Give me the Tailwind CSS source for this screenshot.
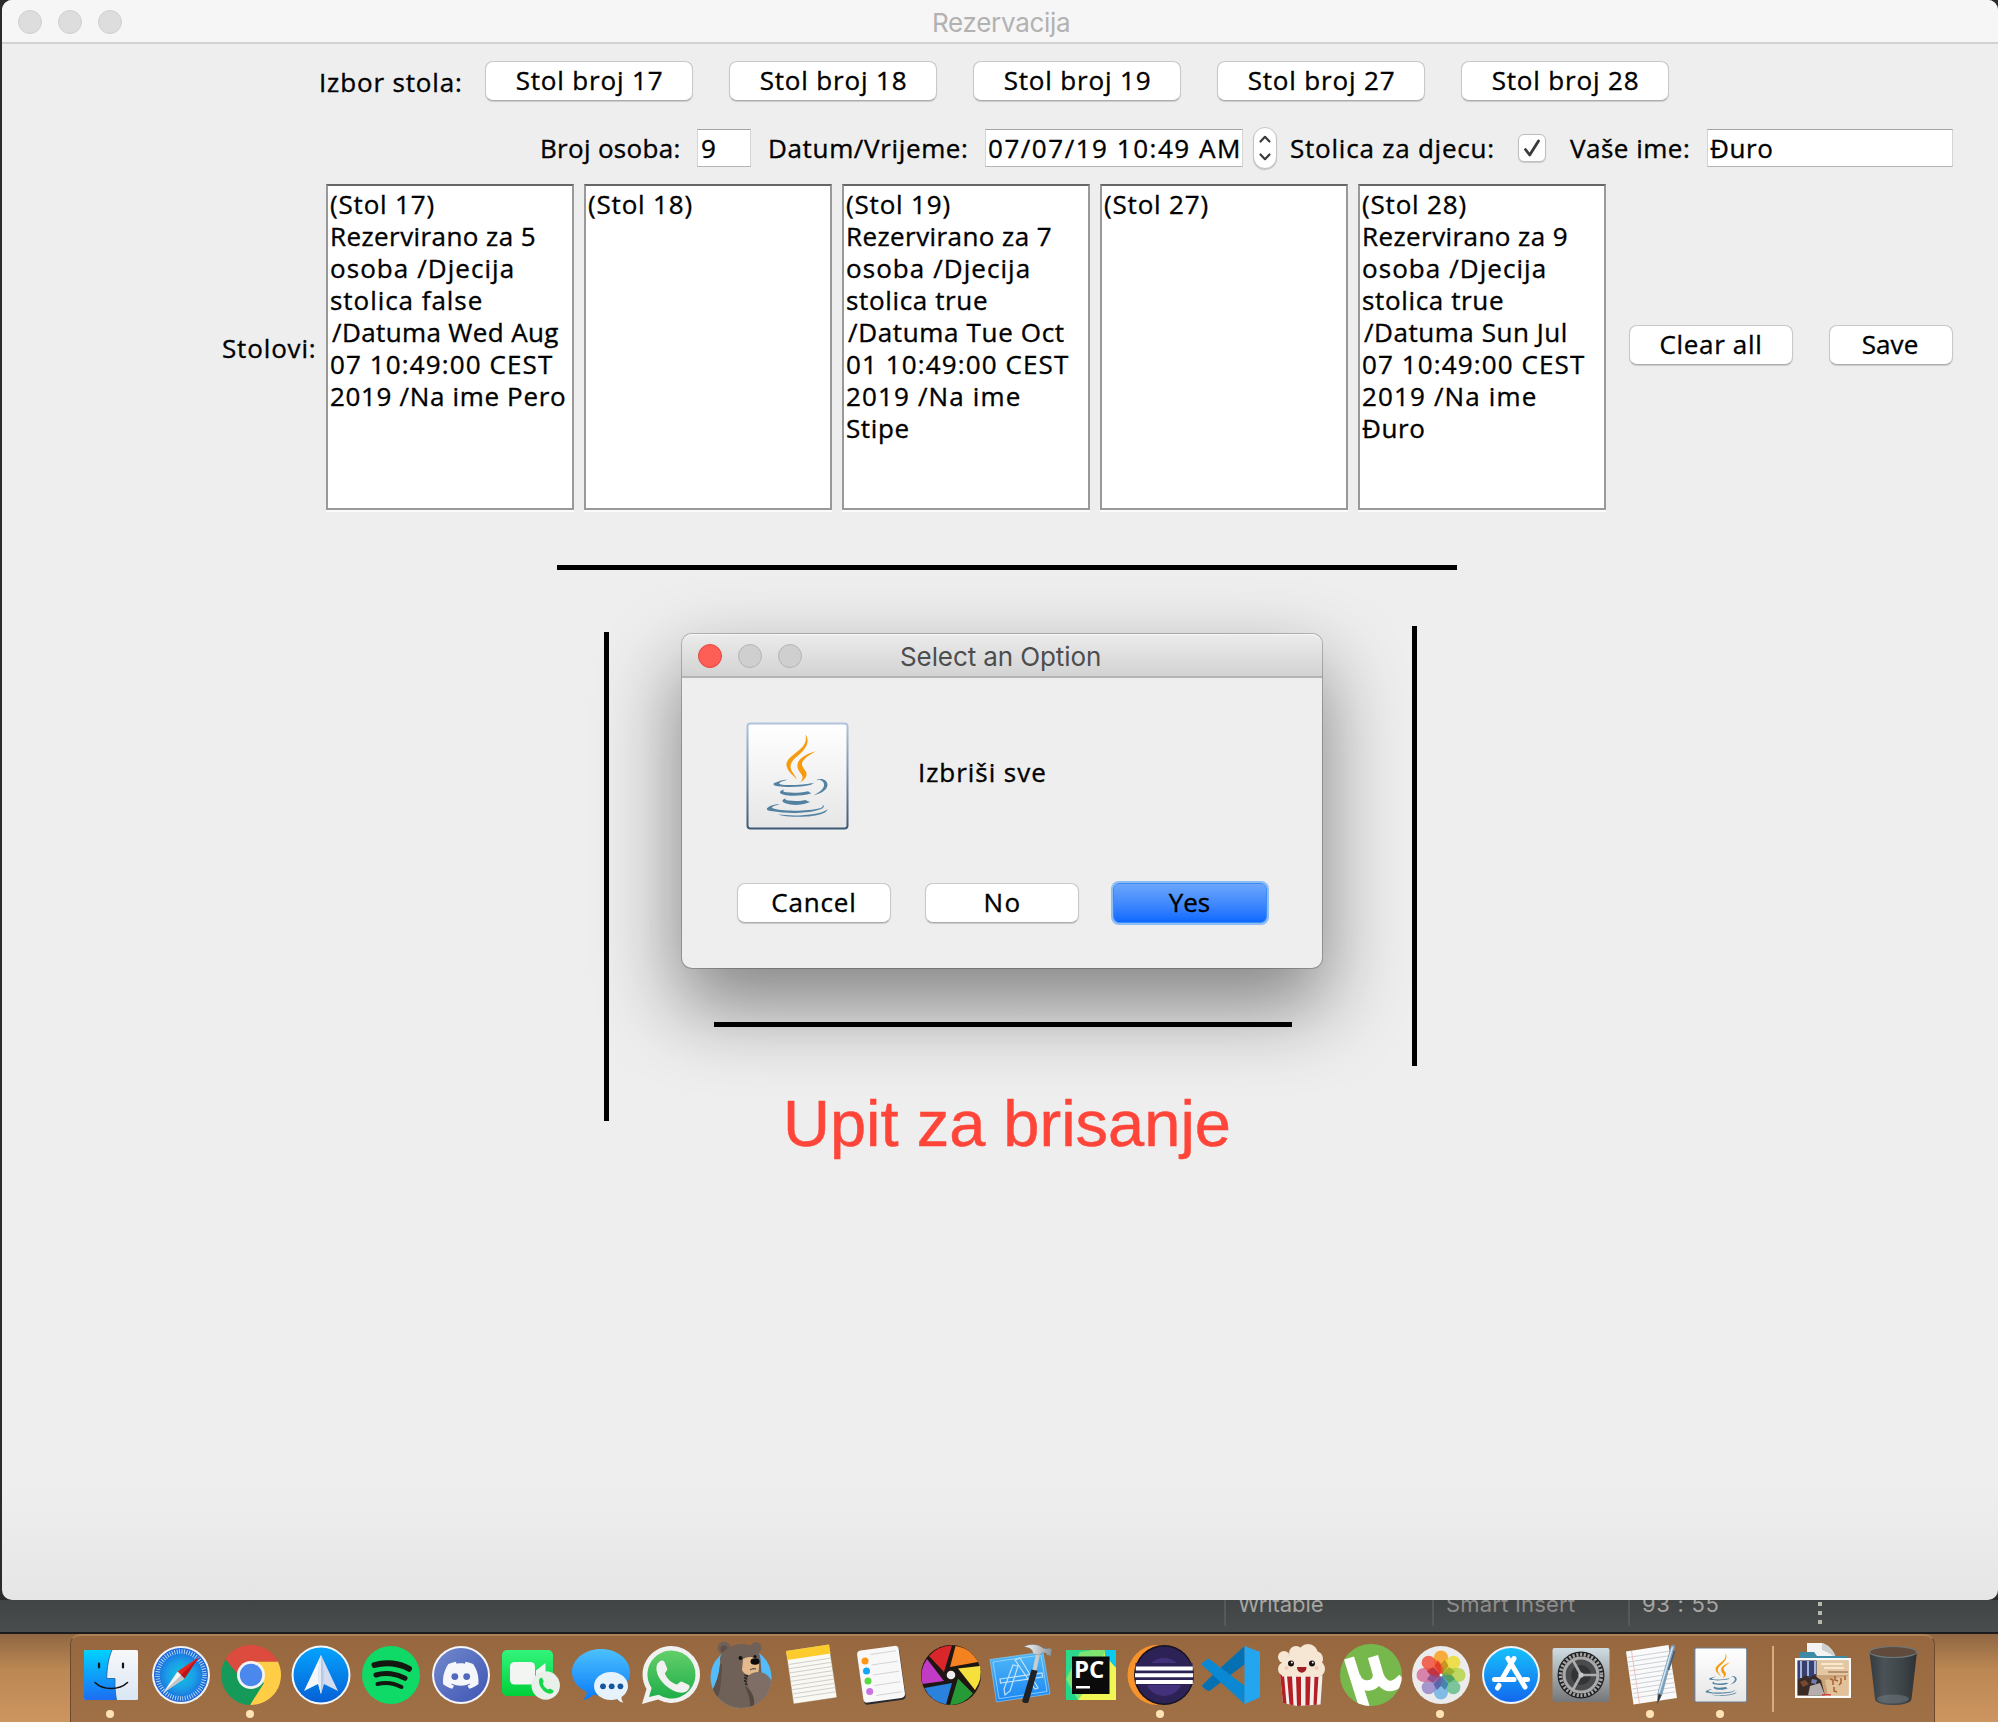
<!DOCTYPE html>
<html lang="hr">
<head>
<meta charset="utf-8">
<title>Rezervacija</title>
<script src="https://cdn.jsdelivr.net/npm/@tailwindcss/browser@4"></script>
</head>
<body class="w-[1998px] h-[1722px] overflow-hidden bg-[#2b2b2d]">
<div class="relative flex flex-col w-[1998px] h-[1722px] overflow-hidden font-['Open_Sans',sans-serif] text-[26px] leading-8 text-black whitespace-nowrap">

  <!-- Main window -->
  <main class="relative ml-0.5 w-[1996px] h-[1600px] shrink-0 flex flex-col rounded-[10px] overflow-hidden bg-linear-to-b from-[#eeeeee] from-93% to-[#e6e6e6] [-webkit-text-stroke:0.35px]">
    <header class="flex items-center h-11 shrink-0 bg-[#f6f6f6] border-b-2 border-[#d2d2d2] pl-4 [-webkit-text-stroke:0]">
      <div class="flex gap-4 w-[914px] pt-px">
        <span class="size-6 rounded-full bg-[#dddddd] border border-[#cfcfcf]"></span>
        <span class="size-6 rounded-full bg-[#dddddd] border border-[#cfcfcf]"></span>
        <span class="size-6 rounded-full bg-[#dddddd] border border-[#cfcfcf]"></span>
      </div>
      <h1 class="pt-1 font-[Inter,sans-serif] tracking-[-0.3px] text-[#b2b2b2]">Rezervacija</h1>
    </header>

    <section class="flex items-center h-10 mt-[17px] pl-[317px]">
      <span class="w-[166px] pt-0.5 tracking-[0.85px]">Izbor stola:</span>
      <div class="flex gap-9 tracking-[0.83px]">
        <button class="flex items-center justify-center w-[208px] h-10 pb-[3px] bg-white rounded-lg border border-[#c8c8c8] border-b-[#acacac] shadow-[0_1px_1px_rgba(0,0,0,0.15)] pl-px">Stol broj 17</button>
        <button class="flex items-center justify-center w-[208px] h-10 pb-[3px] bg-white rounded-lg border border-[#c8c8c8] border-b-[#acacac] shadow-[0_1px_1px_rgba(0,0,0,0.15)] pl-px">Stol broj 18</button>
        <button class="flex items-center justify-center w-[208px] h-10 pb-[3px] bg-white rounded-lg border border-[#c8c8c8] border-b-[#acacac] shadow-[0_1px_1px_rgba(0,0,0,0.15)] pl-px">Stol broj 19</button>
        <button class="flex items-center justify-center w-[208px] h-10 pb-[3px] bg-white rounded-lg border border-[#c8c8c8] border-b-[#acacac] shadow-[0_1px_1px_rgba(0,0,0,0.15)] pl-px">Stol broj 27</button>
        <button class="flex items-center justify-center w-[208px] h-10 pb-[3px] bg-white rounded-lg border border-[#c8c8c8] border-b-[#acacac] shadow-[0_1px_1px_rgba(0,0,0,0.15)] pl-px">Stol broj 28</button>
      </div>
    </section>

    <section class="flex items-center h-[42px] mt-[26px] pl-[538px]">
      <span class="w-[157px] pb-px tracking-[0.3px]">Broj osoba:</span>
      <div class="flex items-center w-[54px] h-[38px] pl-[3px] pb-px bg-white border border-[#d4d4d4] border-t-[#a4a4a4] border-b-[#b4b4b4]">9</div>
      <span class="ml-[17px] w-[217px] pb-px tracking-[0.65px]">Datum/Vrijeme:</span>
      <div class="flex items-center w-[258px] h-[38px] pl-0.5 pb-px bg-white border border-[#d4d4d4] border-t-[#a4a4a4] border-b-[#b4b4b4] tracking-[1.53px]">07/07/19 10:49 AM</div>
      <div class="ml-2.5 w-6 h-[42px] flex items-center justify-center rounded-xl bg-white border border-[#c4c4c4] shadow-[0_1px_1px_rgba(0,0,0,0.2)]">
        <svg class="w-4 h-8" viewBox="0 0 16 32" fill="none" stroke="#3a3a3a" stroke-width="2.2" stroke-linecap="round" stroke-linejoin="round"><path d="M3.5 9.5 8 4.8l4.500 4.700M3.500 22.500 8 27.200l4.500-4.700"/></svg>
      </div>
      <span class="ml-[13px] w-[228px] pb-px tracking-[0.78px]">Stolica za djecu:</span>
      <div class="size-7 flex items-center justify-center rounded-md bg-white border border-[#bdbdbd] shadow-[0_1px_1px_rgba(0,0,0,0.15)]">
        <svg class="size-6" viewBox="0 0 24 24" fill="none" stroke="#3a3a3a" stroke-width="2.800" stroke-linecap="round" stroke-linejoin="round"><path d="M5.500 13.500 9.700 19 18.500 5"/></svg>
      </div>
      <span class="ml-6 w-[137px] pb-px tracking-[0.5px]">Vaše ime:</span>
      <div class="flex items-center w-[246px] h-[38px] pl-0.5 pb-px bg-white border border-[#d4d4d4] border-t-[#a4a4a4] border-b-[#b4b4b4] tracking-[0.6px]">Đuro</div>
    </section>

    <section class="flex items-center h-[326px] mt-[15px] pl-[220px]">
      <span class="w-[104px] pt-0.5 tracking-[0.85px]">Stolovi:</span>
      <div class="flex gap-2.5">
        <div class="flex flex-col w-[248px] h-[326px] pl-0.5 pt-0.5 bg-white border-2 border-[#999999] border-t-[#666666] shadow-[0_2px_0_#fbfbfb]">
          <span class="tracking-[0.82px]">(Stol 17)</span>
          <span class="tracking-[0.42px]">Rezervirano za 5</span>
          <span class="tracking-[1.06px]">osoba /Djecija</span>
          <span class="tracking-[0.95px]">stolica false</span>
          <span class="pl-0.5 tracking-[0.38px]">/Datuma Wed Aug</span>
          <span class="tracking-[1.12px]">07 10:49:00 CEST</span>
          <span class="tracking-[0.66px]">2019 /Na ime Pero</span>
        </div>
        <div class="flex flex-col w-[248px] h-[326px] pl-0.5 pt-0.5 bg-white border-2 border-[#999999] border-t-[#666666] shadow-[0_2px_0_#fbfbfb]">
          <span class="tracking-[0.82px]">(Stol 18)</span>
        </div>
        <div class="flex flex-col w-[248px] h-[326px] pl-0.5 pt-0.5 bg-white border-2 border-[#999999] border-t-[#666666] shadow-[0_2px_0_#fbfbfb]">
          <span class="tracking-[0.82px]">(Stol 19)</span>
          <span class="tracking-[0.42px]">Rezervirano za 7</span>
          <span class="tracking-[1.06px]">osoba /Djecija</span>
          <span class="tracking-[0.64px]">stolica true</span>
          <span class="pl-0.5 tracking-[0.66px]">/Datuma Tue Oct</span>
          <span class="tracking-[1.12px]">01 10:49:00 CEST</span>
          <span class="tracking-[1.14px]">2019 /Na ime</span>
          <span class="tracking-[0.6px]">Stipe</span>
        </div>
        <div class="flex flex-col w-[248px] h-[326px] pl-0.5 pt-0.5 bg-white border-2 border-[#999999] border-t-[#666666] shadow-[0_2px_0_#fbfbfb]">
          <span class="tracking-[0.82px]">(Stol 27)</span>
        </div>
        <div class="flex flex-col w-[248px] h-[326px] pl-0.5 pt-0.5 bg-white border-2 border-[#999999] border-t-[#666666] shadow-[0_2px_0_#fbfbfb]">
          <span class="tracking-[0.82px]">(Stol 28)</span>
          <span class="tracking-[0.42px]">Rezervirano za 9</span>
          <span class="tracking-[1.06px]">osoba /Djecija</span>
          <span class="tracking-[0.64px]">stolica true</span>
          <span class="pl-0.5 tracking-[0.54px]">/Datuma Sun Jul</span>
          <span class="tracking-[1.12px]">07 10:49:00 CEST</span>
          <span class="tracking-[1.14px]">2019 /Na ime</span>
          <span class="tracking-[0.6px]">Đuro</span>
        </div>
      </div>
      <div class="flex gap-9 ml-[23px] pb-1">
        <button class="flex items-center justify-center w-[164px] h-10 pb-[3px] bg-white rounded-lg border border-[#c8c8c8] border-b-[#acacac] shadow-[0_1px_1px_rgba(0,0,0,0.15)] tracking-[0.65px]">Clear all</button>
        <button class="flex items-center justify-center w-[124px] h-10 pb-[3px] pr-0.5 bg-white rounded-lg border border-[#c8c8c8] border-b-[#acacac] shadow-[0_1px_1px_rgba(0,0,0,0.15)] tracking-[0.1px]">Save</button>
      </div>
    </section>
  </main>

  <!-- Floor plan walls -->
  <div class="absolute left-[557px] top-[565px] w-[900px] h-[5px] bg-black"></div>
  <div class="absolute left-[604px] top-[632px] w-[5px] h-[489px] bg-black"></div>
  <div class="absolute left-[1412px] top-[626px] w-[5px] h-[440px] bg-black"></div>

  <!-- Confirmation dialog -->
  <div class="absolute left-[682px] top-[634px] w-[640px] h-[334px] flex flex-col rounded-[10px] bg-[#eeeeee] shadow-[0_0_0_1px_rgba(0,0,0,0.22),0_36px_80px_4px_rgba(0,0,0,0.44)] [-webkit-text-stroke:0.35px]">
    <div class="flex items-center h-11 pl-4 rounded-t-[10px] bg-linear-to-b from-[#ebebeb] to-[#d3d3d3] border-t border-t-[#f7f7f7] border-b-2 border-b-[#b4b4b4] [-webkit-text-stroke:0]">
      <div class="flex gap-4 w-[202px] pt-px">
        <span class="size-6 rounded-full bg-[#fd5f57] border border-[#e2463f]"></span>
        <span class="size-6 rounded-full bg-[#cfcfcf] border border-[#b5b5b5]"></span>
        <span class="size-6 rounded-full bg-[#cfcfcf] border border-[#b5b5b5]"></span>
      </div>
      <h2 class="pt-[3px] font-[Inter,sans-serif] tracking-[-0.1px] text-[#4d4d4d]">Select an Option</h2>
    </div>
    <div class="flex pt-11 pl-16 h-[205px]">
      <svg class="w-[103px] h-[108px]" viewBox="0 0 103 108">
        <defs>
          <linearGradient id="jb" x2="0" y2="1"><stop stop-color="#fff"/><stop offset="1" stop-color="#e6e6e6"/></linearGradient>
          <linearGradient id="js" x2="0" y2="1"><stop stop-color="#b0c4de"/><stop offset="1" stop-color="#3d5a75"/></linearGradient>
        </defs>
        <rect x="1.500" y="1.500" width="100" height="105" rx="3" fill="url(#jb)" stroke="url(#js)" stroke-width="2"/>
        <g transform="translate(10 12.500) scale(3.430)">
          <path id="jcup" fill="#5382a1" d="M8.851 18.560s-.917.534.653.714c1.902.218 2.874.187 4.969-.211 0 0 .552.346 1.321.646-4.699 2.013-10.633-.118-6.943-1.149M8.276 15.933s-1.028.761.542.924c2.032.209 3.636.227 6.413-.308 0 0 .384.389.987.602-5.679 1.661-12.007.130-7.942-1.218M19.330 20.504s.679.559-.747.991c-2.712.822-11.288 1.069-13.669.033-.856-.373.750-.890 1.254-.998.527-.114.828-.093.828-.093-.953-.671-6.156 1.317-2.643 1.887 9.580 1.553 17.462-.700 14.977-1.820M9.292 13.210s-4.362 1.036-1.544 1.412c1.189.159 3.561.123 5.770-.062 1.806-.152 3.618-.477 3.618-.477s-.637.272-1.098.587c-4.429 1.165-12.986.623-10.522-.568 2.082-1.006 3.776-.892 3.776-.892M17.116 17.584c4.503-2.340 2.421-4.589.968-4.285-.355.074-.515.138-.515.138s.132-.207.385-.297c2.875-1.011 5.086 2.981-.928 4.562 0-.001.070-.062.090-.118M9.734 23.924c4.322.277 10.959-.153 11.116-2.198 0 0-.302.775-3.572 1.391-3.688.694-8.239.613-10.937.168 0-.001.553.457 3.393.639"/>
          <path id="jsteam" fill="#f89a0d" d="M13.116 11.475c1.158 1.333-.304 2.533-.304 2.533s2.939-1.518 1.589-3.418c-1.261-1.772-2.228-2.652 3.007-5.688 0-.001-8.216 2.051-4.292 6.573M14.401 0s2.494 2.494-2.365 6.330c-3.896 3.077-.888 4.832-.001 6.836-2.274-2.053-3.943-3.858-2.824-5.539 1.644-2.469 6.197-3.665 5.190-7.627"/>
        </g>
      </svg>
      <span class="pl-[69px] pt-[34px] tracking-[0.95px]">Izbriši sve</span>
    </div>
    <div class="flex items-start gap-[34px] pl-[55px]">
      <button class="flex items-center justify-center w-[154px] h-10 pb-[3px] bg-white rounded-lg border border-[#c8c8c8] border-b-[#acacac] shadow-[0_1px_1px_rgba(0,0,0,0.15)] tracking-[0.84px]">Cancel</button>
      <button class="flex items-center justify-center w-[154px] h-10 pb-[3px] pl-px bg-white rounded-lg border border-[#c8c8c8] border-b-[#acacac] shadow-[0_1px_1px_rgba(0,0,0,0.15)] tracking-[1.4px]">No</button>
      <button class="flex items-center justify-center w-[154px] h-10 pb-[3px] pr-px rounded-md bg-linear-to-b from-[#6ca6fb] to-[#0a69ff] border border-[#3f8bf5] shadow-[0_0_0_2px_#8dbdf5] tracking-[0px]">Yes</button>
    </div>
  </div>

  <div class="absolute left-[714px] top-[1022px] w-[578px] h-[5px] bg-black"></div>
  <p class="absolute left-[783px] top-[1087px] font-['Liberation_Sans',sans-serif] text-[65px] leading-[74px] text-[#ff4539] [-webkit-text-stroke:0.5px]">Upit za brisanje</p>

  <!-- Editor status bar visible behind the window -->
  <div class="flex h-[34px] shrink-0 bg-linear-to-b from-[#404445] to-[#494d4e] border-b-2 border-[#1c1c1e] font-[Inter,sans-serif] text-[22px] text-[#a7a5a2] overflow-hidden pl-[1224px]">
    <div class="w-[208px] h-[26px] border-l-2 border-[#56595a] pl-3 overflow-hidden"><span class="block -mt-3 tracking-[-0.1px]">Writable</span></div>
    <div class="w-[196px] h-[26px] border-l-2 border-[#56595a] pl-3 overflow-hidden"><span class="block -mt-3 tracking-[0.2px] text-[#8f8d8b]">Smart Insert</span></div>
    <div class="w-[190px] h-[26px] border-l-2 border-[#56595a] pl-3 overflow-hidden"><span class="block -mt-3 tracking-[0.7px]">93 : 55</span></div>
    <div class="flex flex-col gap-[5px] pt-0.5">
      <span class="size-1 bg-[#b9b7ab]"></span><span class="size-1 bg-[#b9b7ab]"></span><span class="size-1 bg-[#b9b7ab]"></span>
    </div>
  </div>

  <!-- Desktop strip and dock -->
  <footer class="flex h-[88px] shrink-0 pl-[70px] bg-linear-to-b from-[#8f6742] via-[#bb8753] via-40% to-[#cd9560]">
    <nav class="flex w-[1865px] h-[88px] pl-[5px] rounded-t-[10px] bg-linear-to-b from-[#97683f] to-[#a07046] border-t-2 border-x border-t-[#ad8055] border-x-[#6b4a2e]">

      <svg class="-mt-0.5 w-[70px] h-[88px]" viewBox="0 0 70 88">
        <defs><linearGradient id="fa" x2="0" y2="1"><stop stop-color="#00d2ff"/><stop offset="1" stop-color="#1c6df2"/></linearGradient><linearGradient id="fb" x2="0" y2="1"><stop stop-color="#f8f8fa"/><stop offset="1" stop-color="#d9e6f4"/></linearGradient></defs>
        <rect x="8" y="16" width="54" height="50" rx="1.500" fill="url(#fb)"/>
        <path d="M9.500 16H36c-3.500 8-5 17-5.300 28.500H39c-.2 8 .2 15 1.500 21.500h-31A1.500 1.500 0 0 1 8 64.500v-47A1.500 1.500 0 0 1 9.500 16z" fill="url(#fa)"/>
        <path d="M36 16c-3.500 8-5 17-5.300 28.500H39c-.2 8 .2 15 1.500 21.500" fill="none" stroke="#1f5c94" stroke-width=".8"/>
        <path d="M23 29.500v4M47 29.500v4" stroke="#111" stroke-width="2.200" stroke-linecap="round"/>
        <path d="M19 48.500c8 8 24 8 32.500 0" fill="none" stroke="#111" stroke-width="1.600" stroke-linecap="round"/>
        <circle cx="34" cy="80" r="4" fill="#ffe3b6"/>
      </svg>

      <svg class="-mt-0.5 w-[70px] h-[88px]" viewBox="0 0 70 88">
        <defs><radialGradient id="sa"><stop stop-color="#12c4da"/><stop offset=".5" stop-color="#1a9fe8"/><stop offset="1" stop-color="#1c62d8"/></radialGradient></defs>
        <circle cx="35" cy="41" r="29" fill="#f0f2f4"/><circle cx="35" cy="41" r="27" fill="url(#sa)"/>
        <circle cx="35" cy="41" r="23.500" fill="none" stroke="#cfe6fb" stroke-width="4.500" stroke-dasharray=".8 1.660"/>
        <path d="M53 23 38.500 44.500 31.500 37.500z" fill="#e8221f"/><path d="M17 59 31.500 37.500l7 7z" fill="#f3f3f3"/><path d="M17 59 35 41l3.500 3.500z" fill="#c3c3c3"/><path d="M53 23 35 41l3.500 3.500z" fill="#b9141a"/>
      </svg>

      <svg class="-mt-0.5 w-[70px] h-[88px]" viewBox="0 0 70 88">
        <path d="M35 41V27.500h26.800A30 30 0 0 1 34 71l13-24z" fill="#ffcd46"/>
        <path d="M35 41 9.800 25A30 30 0 0 0 34 71l14-22z" fill="#159a5a"/>
        <path d="M9.500 25.200a30 30 0 0 1 52.300 2.300H35L24 43z" fill="#dd4b3e"/>
        <circle cx="35" cy="41" r="14" fill="#f4f4f4"/><circle cx="35" cy="41" r="11.200" fill="#4a88ee"/>
        <circle cx="34" cy="80" r="4" fill="#ffe3b6"/>
      </svg>

      <svg class="-mt-0.5 w-[70px] h-[88px]" viewBox="0 0 70 88">
        <defs><linearGradient id="sp" x2="0" y2="1"><stop stop-color="#04a3fd"/><stop offset="1" stop-color="#0560d6"/></linearGradient></defs>
        <circle cx="35" cy="41" r="29.500" fill="#f5f8fb"/><circle cx="35" cy="41" r="27.500" fill="url(#sp)"/>
        <path d="M35 21 18 57l14-7 3 10z" fill="#f4f7fc"/><path d="M35 21l17 36-14-7-3 10z" fill="#d3dcf0"/><path d="M35 21c-3.500 12-3.500 28 0 39 3.500-11 3.500-27 0-39z" fill="#bcc8e2"/><path d="M35 21c-3.500 12-3.500 28 0 39z" fill="#e6ecf7"/>
      </svg>

      <svg class="-mt-0.5 w-[70px] h-[88px]" viewBox="0 0 70 88">
        <circle cx="35" cy="41" r="29" fill="#0fd967"/>
        <g fill="none" stroke="#14170f" stroke-linecap="round"><path d="M18.500 31c11-3.300 25-2 34.500 3.800" stroke-width="6"/><path d="M20 41c9-2.800 20.500-1.500 29 3.300" stroke-width="5"/><path d="M21.500 50c8-2 16.500-1 24 3" stroke-width="4"/></g>
      </svg>

      <svg class="-mt-0.5 w-[70px] h-[88px]" viewBox="0 0 70 88">
        <defs><linearGradient id="di" x2="1" y2="1"><stop stop-color="#7289cb"/><stop offset="1" stop-color="#3f55b5"/></linearGradient></defs>
        <circle cx="35" cy="41" r="29" fill="#f5f6fa"/><circle cx="35" cy="41" r="27" fill="url(#di)"/>
        <g transform="translate(17 23.500) scale(1.480)"><path fill="#f5f6fa" d="M20.317 4.370a19.791 19.791 0 0 0-4.885-1.515.074.074 0 0 0-.079.037c-.211.375-.445.865-.608 1.250-1.845-.276-3.680-.276-5.487 0-.164-.393-.406-.874-.618-1.250a.077.077 0 0 0-.079-.037 19.736 19.736 0 0 0-4.885 1.515.070.070 0 0 0-.032.028C.533 9.046-.319 13.580.099 18.058a.082.082 0 0 0 .031.056c2.053 1.508 4.041 2.423 5.993 3.029a.078.078 0 0 0 .084-.028c.462-.630.873-1.295 1.226-1.994a.076.076 0 0 0-.042-.106c-.653-.248-1.274-.550-1.872-.892a.077.077 0 0 1-.008-.128c.126-.094.252-.192.372-.291a.074.074 0 0 1 .078-.011c3.928 1.793 8.180 1.793 12.061 0a.074.074 0 0 1 .079.010c.120.099.246.198.373.292a.077.077 0 0 1-.007.128 12.299 12.299 0 0 1-1.873.891.077.077 0 0 0-.041.107c.360.698.772 1.363 1.225 1.993a.076.076 0 0 0 .084.029c1.961-.607 3.950-1.522 6.002-3.029a.077.077 0 0 0 .031-.055c.500-5.177-.838-9.674-3.549-13.660a.061.061 0 0 0-.031-.029z"/><circle cx="8" cy="12.900" r="2.300" fill="#5268be"/><circle cx="16" cy="12.900" r="2.300" fill="#5268be"/></g>
      </svg>

      <svg class="-mt-0.5 w-[70px] h-[88px]" viewBox="0 0 70 88">
        <defs><linearGradient id="ft" x2="0" y2="1"><stop stop-color="#32f57c"/><stop offset="1" stop-color="#00cf3a"/></linearGradient></defs>
        <rect x="6" y="16" width="51" height="46" rx="5" fill="url(#ft)"/>
        <rect x="14" y="28" width="25" height="22.500" rx="4.500" fill="#f2f5f2"/><path d="M40 36.500 49.500 29v16H40z" fill="#f2f5f2"/>
        <circle cx="49.700" cy="51.500" r="14.200" fill="#e9efe9"/>
        <path d="M43.200 45.500c1-2 2.700-2 3.200-1l1.200 2.700c.3 1-1 1.600-.8 2.400.8 2.700 2.600 4.600 5 5.800.8.300 1.500-1 2.500-.6l2.700 1.500c1 .7.700 2-1 3-6 2.500-14.500-7-12.800-13.800z" fill="#13d648"/>
      </svg>

      <svg class="-mt-0.5 w-[70px] h-[88px]" viewBox="0 0 70 88">
        <defs><linearGradient id="ms" x2="0" y2="1"><stop stop-color="#4cc1fc"/><stop offset="1" stop-color="#0a7bfb"/></linearGradient></defs>
        <path d="M35 15c16 0 29 10 29 23.500S51 61.500 35 61.500c-3 0-6-.3-8-.8-3 3.500-7 5-10 5 2.500-2.200 3.800-5 3.700-8C12 54 6 46.500 6 38.500 6 25 19 15 35 15z" fill="url(#ms)"/>
        <path d="M45 38c9.500 0 17 6.300 17 14 0 4.600-2.700 8.600-6.500 11-.2 2.200.6 4.200 2 5.600-2.600-.3-5-1.800-6.300-3.700-2 .7-4 1.100-6.200 1.100-9.500 0-17-6.300-17-14s7.500-14 17-14z" fill="#e6f2fc"/>
        <g fill="#15569e"><circle cx="37" cy="52.300" r="2.900"/><circle cx="45.700" cy="52.300" r="2.900"/><circle cx="54.400" cy="52.300" r="2.900"/></g>
      </svg>

      <svg class="-mt-0.5 w-[70px] h-[88px]" viewBox="0 0 70 88">
        <defs><linearGradient id="wa" x2="0" y2="1"><stop stop-color="#63cf6a"/><stop offset="1" stop-color="#1fae48"/></linearGradient></defs>
        <path d="M35.500 12A28.500 28.500 0 1 1 22 65.600L6 70l4.500-15A28.500 28.500 0 0 1 35.500 12z" fill="#f1f1f1"/>
        <path d="M35.500 16.500a24 24 0 1 1-12.800 44.300L13 63l2.600-9A24 24 0 0 1 35.500 16.500z" fill="url(#wa)"/>
        <path d="M22 29c3-3.500 5.500-3 6.500-1l2.700 6.500c.6 2-2.700 4-2.200 5.500 2.200 5 6 8.500 11.500 10.500 1.500.4 3.300-3.500 5-3l7 3.300c2 1 1 4-1.500 6.200C41 64 19 47 20.500 33c.1-1.500.7-3 1.500-4z" fill="#f1f1f1"/>
      </svg>

      <svg class="-mt-0.5 w-[70px] h-[88px]" viewBox="0 0 70 88">
        <defs><clipPath id="bc"><path d="M0 0h70v43.500h-4.500a30.500 30.500 0 0 1-61 0H0z"/></clipPath></defs>
        <circle cx="35" cy="43.500" r="30.500" fill="#55bcfb"/>
        <g clip-path="url(#bc)">
          <circle cx="18" cy="14" r="6.500" fill="#6f6058"/><circle cx="50" cy="13.500" r="5.500" fill="#6f6058"/><circle cx="18" cy="15" r="3.500" fill="#5d4f48"/>
          <path d="M14 24c2-8 12-14 22-14s18 5 18.500 15l1 14 9 6v30H4V60c6-10 11-22 10-36z" fill="#6f6058"/>
          <path d="M4 62C10 50 13 42 14 30l2 0c0 20-3 34-8 42z" fill="#5d4f48"/>
          <path d="M37 25c6-4 14-2 16 4 0 6 0 11-3 12-6 1-12 0-14-5z" fill="#e4b98c"/>
          <circle cx="34.500" cy="24" r="2" fill="#111"/><circle cx="49" cy="22.500" r="1.600" fill="#111"/>
          <ellipse cx="49" cy="27.500" rx="4.500" ry="3.200" fill="#0c0c0c"/>
          <path d="M44 36c2-1.500 4-1.500 6-1" stroke="#333" fill="none"/>
          <path d="M38 41l4 1-4 2 4 1-4 2 4 1-3 2 4 1" stroke="#222" fill="none"/>
          <path d="M43 54c-5-9 0-16 9-16 8 0 14 6 13 12v26H45c5-8 2-14-2-22z" fill="#7e6e66"/>
          <path d="M39 52c5 3 12 12 8 22l-4 1c3-8-1-15-4-23z" fill="#54473f"/>
        </g>
      </svg>

      <svg class="-mt-0.5 w-[70px] h-[88px]" viewBox="0 0 70 88">
        <path d="M10 17 53 10.500 61 63.500 17.500 70z" fill="#f9f8f3" stroke="#8a6b3a" stroke-width=".5"/>
        <path d="M10 17 53 10.500l1.500 9L11.400 26z" fill="#fccb2c"/>
        <path d="M12.500 30.500 55 24.100M13.200 34.700 55.600 28.300M13.800 38.900 56.200 32.500M14.400 43.100 56.800 36.700M15 47.300 57.500 40.900M15.700 51.500 58.100 45.100M16.300 55.700 58.700 49.300M16.900 59.900 59.400 53.500M17.500 64.100 60 57.700" stroke="#c9c9c6" stroke-width=".9"/>
      </svg>

      <svg class="-mt-0.5 w-[70px] h-[88px]" viewBox="0 0 70 88">
        <rect x="14.500" y="15.500" width="42" height="53" rx="4" transform="rotate(-8 35.500 41)" fill="#26282c"/>
        <rect x="14" y="14" width="42" height="52.500" rx="4" transform="rotate(-8 35 40)" fill="#f8f8f8"/>
        <path d="M24.500 20.500 50 16.700M25.500 31 51.500 27.200M27 41 53 37.200M28.300 51.500 54.500 47.700M30 61.500 55.500 57.700" stroke="#cfcfcf" stroke-width=".9"/>
        <circle cx="19" cy="27" r="3.500" fill="#ff9418"/><circle cx="20.500" cy="37" r="3.500" fill="#12a6f8"/><circle cx="22" cy="47" r="3.500" fill="#5bd847"/><circle cx="23.700" cy="57.500" r="3.500" fill="#cb72e2"/>
      </svg>

      <svg class="-mt-0.5 w-[70px] h-[88px]" viewBox="0 0 70 88">
        <circle cx="35" cy="41" r="30" fill="#1d1613"/>
        <path d="M36 11.500 28 38 13 22A30 30 0 0 1 36 11.500z" fill="#d9262b"/>
        <path d="M39.500 12A30 30 0 0 1 62 28L34 33z" fill="#f58220"/>
        <path d="M64 32a30 30 0 0 1-5 24L42 34.500z" fill="#f5e03c"/>
        <path d="M57 59.500A30 30 0 0 1 34 71l8-26.500z" fill="#279a38"/>
        <path d="M30 70.500A30 30 0 0 1 8.500 54L36 49z" fill="#2a82dd"/>
        <path d="M6.500 50A30 30 0 0 1 11 25l17 22z" fill="#c13bc4"/>
        <circle cx="35" cy="41" r="4.300" fill="#eeeeee"/>
      </svg>

      <svg class="-mt-0.5 w-[70px] h-[88px]" viewBox="0 0 70 88">
        <defs><linearGradient id="xc" x2="0" y2="1"><stop stop-color="#52b9f5"/><stop offset="1" stop-color="#1a86f5"/></linearGradient><linearGradient id="xh" x2="1"><stop stop-color="#fafafa"/><stop offset="1" stop-color="#8b9298"/></linearGradient></defs>
        <path d="M4 25.500 57 18l7 42-53.500 8z" fill="url(#xc)" stroke="#8fd0fa" stroke-width=".6"/>
        <path d="M7 28 55 21l6 36.500-48 7.200z" fill="none" stroke="#a5d8fb" stroke-width=".8"/>
        <g fill="none" stroke="#bfe3fb" stroke-width="1.200"><path d="M29 26 49 55l3-1L34 24zM27 31l-9 24 1 6 5-4 8-25zM14 45l42-6 .6 4-42 6z"/></g>
        <path d="M50 20 46 38l4 1 4-19z" fill="#c8ccd0"/>
        <path d="M45.500 35.500l6 1.300L42.500 68c-.7 2-6.500 1-6.300-1z" fill="#1e2226"/>
        <path d="M38 12.500c6-3 14-3 19 1.500l4 1 1-1 4 1-1 7-4-1-1-2h-4l-2 2-7-1c0-5-4-6.500-9-7.500z" fill="url(#xh)" stroke="#6c7278" stroke-width=".4"/>
      </svg>

      <svg class="-mt-0.5 w-[70px] h-[88px]" viewBox="0 0 70 88">
        <path d="M10 16h50v50H10z" fill="#2bd98e"/><path d="M36 16h13l11 14v36H22l-4-22z" fill="#d8f04b"/><path d="M10 45l14-27 14-2h12L26 66H22z" fill="#7ee572"/><path d="M49 16h11v17l-11 2z" fill="#0cc9ef"/><path d="M22 66l31-40 7 8v32z" fill="#f0f755"/><path d="M10 50l12 16H10z" fill="#21d789"/>
        <rect x="16" y="22.500" width="37.500" height="37.500" fill="#0b0b0b"/><path d="M20 52h14v2.500H20z" fill="#fff"/>
        <text x="18" y="43.500" font-family="Open Sans, sans-serif" font-weight="700" font-size="24" fill="#fff">PC</text>
      </svg>

      <svg class="-mt-0.5 w-[70px] h-[88px]" viewBox="0 0 70 88">
        <circle cx="31.500" cy="41" r="30" fill="#f7922c"/>
        <circle cx="38" cy="41" r="30" fill="#15121f"/><circle cx="38.200" cy="41" r="28.500" fill="#2c2255"/><circle cx="38" cy="43" r="19" fill="#43317c"/>
        <path d="M9.500 29h57v22h-57z" fill="#2c2255"/>
        <path d="M9.800 32.500h57v4H9.800zM9 39.300h58.200v4H9zM9.800 46h57v4H9.800z" fill="#fff"/>
        <circle cx="34" cy="80" r="4" fill="#ffe3b6"/>
      </svg>

      <svg class="-mt-0.5 w-[70px] h-[88px]" viewBox="0 0 70 88">
        <path d="M48.500 12 13 44.500 6.500 51c-.7 1 0 2 .6 2.500l4 3c1 .7 2 .5 3 0L49 30z" fill="#0571b3"/>
        <path d="M48.500 70 6.500 31.500c-1-1-.8-2 0-2.700l4.300-3.300c1-.7 2-.5 3 0L49 52z" fill="#0a88d3"/>
        <path d="M48.500 12 64 18v45.500L48.500 70z" fill="#23a5f0"/>
      </svg>

      <svg class="-mt-0.5 w-[70px] h-[88px]" viewBox="0 0 70 88">
        <path d="M14 40 56.500 41.500 54.500 70.500 31 72 17 69z" fill="#f1eeec"/>
        <g fill="#b41f24"><path d="M14 40l4 1 2.500 29-3.500-1zM21 41.500l5 .6 1.500 29.200-4-.8zM30 42.500h5l0 29.300-4 .2zM39.500 42.500l5-.3-1 29-4 .3zM48.500 42l4-.2-1.800 29-3.200.2z"/></g>
        <g fill="#f6e7d4"><circle cx="18" cy="23" r="6"/><circle cx="30" cy="19" r="7"/><circle cx="42" cy="20" r="10"/><circle cx="19" cy="35" r="7"/><circle cx="51" cy="35" r="8"/><circle cx="49" cy="25" r="8"/><path d="M16 22h36v20.500H16z"/></g>
        <circle cx="25" cy="29.500" r="3" fill="#161010"/><circle cx="46" cy="29.500" r="3" fill="#161010"/><circle cx="25.800" cy="28.500" r="1" fill="#fff"/><circle cx="46.800" cy="28.500" r="1" fill="#fff"/>
        <circle cx="20.500" cy="34" r="2" fill="#f6c9b0"/><circle cx="50.500" cy="34" r="2" fill="#f6c9b0"/>
        <path d="M31 33h9.500c0 7.500-9.500 7.500-9.500 0z" fill="#a01f26"/>
      </svg>

      <svg class="-mt-0.5 w-[70px] h-[88px]" viewBox="0 0 70 88">
        <defs><clipPath id="uc"><circle cx="35" cy="41" r="31"/></clipPath></defs>
        <circle cx="35" cy="41" r="31" fill="#76b84b"/>
        <g clip-path="url(#uc)" fill="none" stroke="#fff" stroke-width="10.500"><path d="M13 24 29 75"/><path d="M19 42c4 14 24 12 23-2L37 22.500M41 36c2 10 8 18 16 15.500 4-1 6-3 10-7"/></g>
      </svg>

      <svg class="-mt-0.5 w-[70px] h-[88px]" viewBox="0 0 70 88">
        <circle cx="35" cy="41" r="29" fill="#ececec"/>
        <g fill-opacity=".85">
          <rect x="28" y="16.500" width="14" height="25" rx="7" fill="#f9a01e"/>
          <rect x="28" y="16.500" width="14" height="25" rx="7" fill="#ecdc30" transform="rotate(45 35 41)"/>
          <rect x="28" y="16.500" width="14" height="25" rx="7" fill="#b5d348" transform="rotate(90 35 41)"/>
          <rect x="28" y="16.500" width="14" height="25" rx="7" fill="#66c08c" transform="rotate(135 35 41)"/>
          <rect x="28" y="16.500" width="14" height="25" rx="7" fill="#70b4e4" transform="rotate(180 35 41)"/>
          <rect x="28" y="16.500" width="14" height="25" rx="7" fill="#9987c8" transform="rotate(225 35 41)"/>
          <rect x="28" y="16.500" width="14" height="25" rx="7" fill="#d3719f" transform="rotate(270 35 41)"/>
          <rect x="28" y="16.500" width="14" height="25" rx="7" fill="#f2503c" transform="rotate(315 35 41)"/>
        </g>
        <g fill-opacity=".6">
          <path d="M35 41l-6.500-9 3.500-6 3 4z" fill="#d8281e"/><path d="M35 41l0-11 4-4 3.500 6z" fill="#b06a10"/><path d="M35 41l8-8 6 4.500-4 3.500z" fill="#8a9a1c"/><path d="M35 41h11l3 4-6 4z" fill="#3c8a48"/>
          <path d="M35 41l7.500 9-3.500 6-4-4z" fill="#25678c"/><path d="M35 41v11l-4 4-3.500-6z" fill="#354a96"/><path d="M35 41l-8 8-6-4 3-4z" fill="#6a3a80"/><path d="M35 41H24l-3-4 6-4z" fill="#a31c3c"/>
        </g>
        <circle cx="35" cy="41" r="1.500" fill="#fff"/>
        <circle cx="34" cy="80" r="4" fill="#ffe3b6"/>
      </svg>

      <svg class="-mt-0.5 w-[70px] h-[88px]" viewBox="0 0 70 88">
        <defs><linearGradient id="as" x2="0" y2="1"><stop stop-color="#16c0fb"/><stop offset="1" stop-color="#1268ee"/></linearGradient></defs>
        <circle cx="35" cy="41" r="29" fill="#eef3f8"/><circle cx="35" cy="41" r="27" fill="url(#as)"/>
        <g stroke="#fff" stroke-width="5" stroke-linecap="round" fill="none"><path d="M18.500 45.500H38M48 45.500h3.500M32 24.500 49 53M38 24.500 26 45M23 51.500l-1.500 2.500"/></g>
      </svg>

      <svg class="-mt-0.5 w-[70px] h-[88px]" viewBox="0 0 70 88">
        <defs><linearGradient id="st" x2="0" y2="1"><stop stop-color="#cfdde3"/><stop offset="1" stop-color="#757779"/></linearGradient></defs>
        <rect x="6.500" y="14" width="57" height="54" rx="2" fill="url(#st)"/>
        <circle cx="35" cy="41" r="23.500" fill="#1d1e20"/>
        <circle cx="35" cy="41" r="20.500" fill="none" stroke="#a4a4a4" stroke-width="3.500" stroke-dasharray="2.200 1.600"/>
        <circle cx="35" cy="41" r="17" fill="#4a4b4d" stroke="#a9a9a9" stroke-width="3.200"/>
        <circle cx="35" cy="41" r="10" fill="#333436"/>
        <path d="M35 41 27 26.500M35 41h17M35 41 27 55.500" stroke="#adadad" stroke-width="2.600"/><circle cx="35" cy="41" r="2.600" fill="#c9c9c9"/>
      </svg>

      <svg class="-mt-0.5 w-[70px] h-[88px]" viewBox="0 0 70 88">
        <path d="M10 17.500 52.500 11 61 64 17.500 70.500z" fill="#fafafa"/>
        <path d="M11.500 23.500 53 17.200M12.200 28 53.700 21.700M12.900 32.500 54.400 26.200M13.600 37 55.100 30.700M14.300 41.500 55.800 35.200M15 46 56.500 39.700M15.700 50.500 57.200 44.200M16.400 55 57.900 48.700M17.100 59.500 58.600 53.200M17.800 64 59.500 57.700" stroke="#c5cbd2" stroke-width=".9"/>
        <path d="M15.500 17 23.500 69.500" stroke="#efb5b5" stroke-width=".8"/>
        <path d="M55 12c1.500-2 4-1.500 4 1L46.500 60 41 71l.5-12z" fill="#7e9fb9"/><path d="M56.500 13 43 59" stroke="#d6e5f0" stroke-width="1.500"/><path d="M42.500 60l3 1L41 71z" fill="#333"/><path d="M58.500 17 52.500 36" stroke="#3d5d78" stroke-width="1.500"/>
        <circle cx="34" cy="80" r="4" fill="#ffe3b6"/>
      </svg>

      <svg class="-mt-0.5 w-[70px] h-[88px]" viewBox="0 0 70 88">
        <rect x="8.800" y="14" width="52" height="54" rx="1.500" fill="url(#jb)" stroke="#6d7b8b" stroke-width="1.200"/>
        <g transform="translate(14 19.500) scale(1.760)"><use href="#jcup"/><use href="#jsteam"/></g>
        <circle cx="34" cy="80" r="4" fill="#ffe3b6"/>
      </svg>

      <div class="w-8 pt-2.5 pl-4"><div class="w-0.5 h-[66px] bg-[#dcab7c]"></div></div>

      <svg class="-mt-0.5 w-[70px] h-[88px]" viewBox="0 0 70 88">
        <path d="M19 9h15c7 2 12 8 14 15H19z" fill="#f3f3f3"/><path d="M34 9c7 2 12 8 14 15-4-3-8-6-14-8z" fill="#cfcfcf"/>
        <path d="M11 26v-5c0-2 1-3 3-3h12l3 4h29c1 0 2 1 2 2v4H11z" fill="#3d8ba6"/>
        <rect x="7" y="24" width="56" height="40" fill="#fafafa"/>
        <rect x="9.500" y="26.500" width="51" height="35" fill="#c9a27a"/>
        <path d="M9.500 26.500h19V46h-19z" fill="#39406e"/><path d="M13 27v17M20 27v15M27 27v13" stroke="#9fb4e0" stroke-width="2"/>
        <path d="M29 26.500h31.500V41H29z" fill="#e3c7a2"/><path d="M33 30h22M36 34h20" stroke="#fff3dc" stroke-width="1.500"/><path d="M40 38h20" stroke="#a5805c" stroke-width="1.500"/>
        <path d="M9.500 46 14 44l4-3 3 3 5-3 4 3 3 2 4 15.500H9.500z" fill="#3a2a26"/><path d="M22 52l10-3 5 12.500H20z" fill="#b5aeac"/><path d="M12 48l5-2 4 4-6 3z" fill="#7a4a30"/><path d="M24 45l5 1-1 4-5-1z" fill="#6d7fae"/>
        <path d="M37 46l23.500-4v19.500H40z" fill="#e2c19a"/><path d="M42 45l3 1v5M47 42v4l3 1M53 44v5l-2 2M57 42v4M46 53v4l3 1" stroke="#a8622e" stroke-width="1.500" fill="none"/><path d="M34 60h9v1.500h-9z" fill="#d8433e"/>
      </svg>

      <svg class="-mt-0.5 w-[70px] h-[88px]" viewBox="0 0 70 88">
        <defs><linearGradient id="tr" x2="1"><stop stop-color="#343a3e"/><stop offset=".3" stop-color="#4b5358"/><stop offset=".7" stop-color="#3d4448"/><stop offset="1" stop-color="#2c3134"/></linearGradient></defs>
        <path d="M11.500 18 17 65c.6 8 35.500 8 36.500 0l5.500-47z" fill="url(#tr)"/>
        <ellipse cx="35" cy="65" rx="16" ry="4.500" fill="#7b8388" fill-opacity=".45"/>
        <ellipse cx="35.200" cy="18" rx="23.500" ry="5.500" fill="#5f4a3b" stroke="#70787c" stroke-width="1.200"/>
      </svg>
    </nav>
  </footer>
</div>
</body>
</html>
